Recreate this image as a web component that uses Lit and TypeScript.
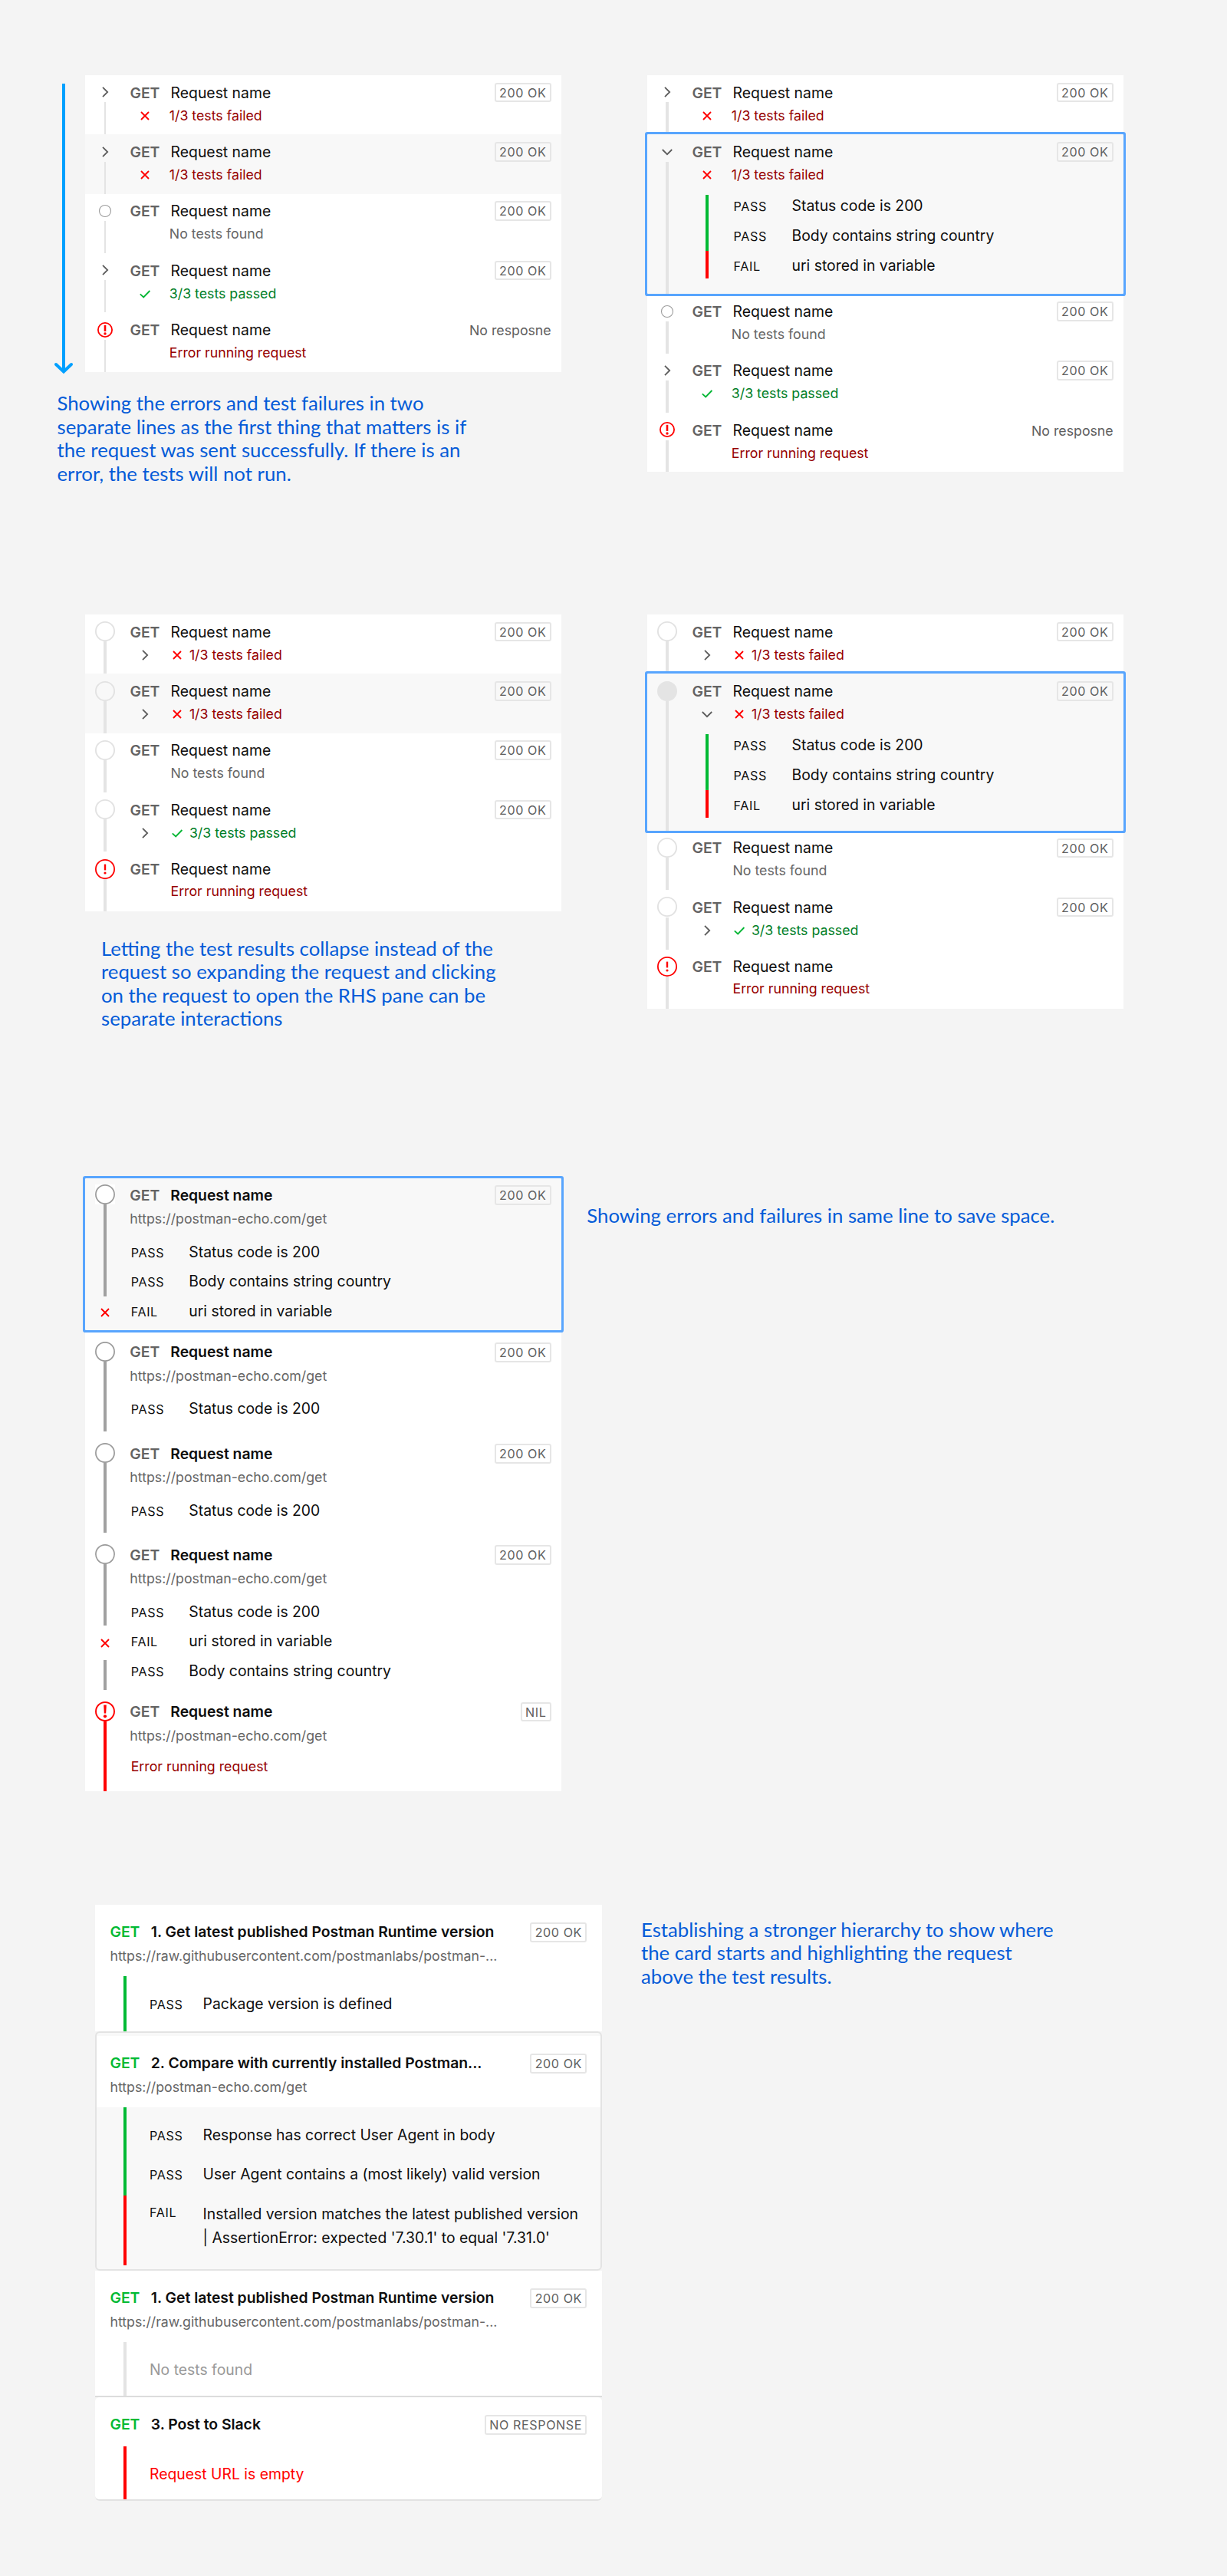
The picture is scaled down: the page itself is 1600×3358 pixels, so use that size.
import { LitElement, html, svg, css, nothing, TemplateResult } from "lit";
import { customElement, property } from "lit/decorators.js";
import { classMap } from "lit/directives/class-map.js";
import { styleMap } from "lit/directives/style-map.js";

type IconName = "right" | "down" | "cross" | "tick" | "dot" | "ring" | "disc" | "ring-dark" | "alert" | "alert-small" | "alert-bold";

interface Test {
  state: "PASS" | "FAIL";
  text: string;
  detail?: string;
}

interface Row {
  rail: IconName;
  height?: number;
  hover?: boolean;
  selected?: boolean;
  toggle?: IconName;
  icon?: IconName;
  tone: "bad" | "good" | "muted";
  summary: string;
  status?: string;
  plainStatus?: boolean;
  tests?: Test[];
}

const ring = (r: number, color: string, width: number, fill = "none") =>
  svg`<circle cx="13" cy="13" r=${r} fill=${fill} stroke=${color} stroke-width=${width}></circle>`;

const shapes: Record<IconName, TemplateResult<2>> = {
  right: svg`<path d="M10 6.8 L16.2 13 L10 19.2" fill="none" stroke="#5c5c5c" stroke-width="1.8"></path>`,
  down: svg`<path d="M6.8 10 L13 16.2 L19.2 10" fill="none" stroke="#5c5c5c" stroke-width="1.8"></path>`,
  cross: svg`<path d="M8 8 L18 18 M18 8 L8 18" fill="none" stroke="#ff0000" stroke-width="1.9"></path>`,
  tick: svg`<path d="M6.8 13.4 L11.2 17.4 L19.4 9" fill="none" stroke="#00b634" stroke-width="1.9"></path>`,
  dot: ring(7.5, "#9c9c9c", 1.1),
  ring: ring(12.1, "#e2e2e2", 1.9),
  disc: ring(12.1, "#e4e4e4", 1.8, "#e4e4e4"),
  "ring-dark": ring(12.1, "#9a9a9a", 1.7),
  alert: svg`${ring(12.1, "#ff0000", 1.8)}<path d="M13 6.6 V14.4" stroke="#ff0000" stroke-width="2.4"></path><circle cx="13" cy="18" r="1.6" fill="#ff0000"></circle>`,
  "alert-small": svg`${ring(9.1, "#ff0000", 1.8)}<path d="M13 6.8 V15" stroke="#ff0000" stroke-width="2.6"></path><circle cx="13" cy="18" r="1.7" fill="#ff0000"></circle>`,
  "alert-bold": svg`${ring(12, "#ff0000", 1.9)}<path d="M11.2 4.6 H14.8 L14.2 15.6 H11.8 Z" fill="#ff0000"></path><circle cx="13" cy="19.3" r="2.1" fill="#ff0000"></circle>`,
};

const icon = (name: IconName) =>
  html`<svg class="icon" width="26" height="26" viewBox="0 0 26 26">${shapes[name]}</svg>`;

const shared = css`
  :host {
    display: block;
    font-family: Inter, "Liberation Sans", sans-serif;
    font-size: 19.36px;
    line-height: 24px;
    color: #0e0e0e;
    box-sizing: border-box;
  }
  .icon {
    display: block;
    flex: none;
    overflow: visible;
  }
  .badge {
    box-sizing: border-box;
    height: 25.6px;
    padding: 1px 4.25px 0;
    border: 2px solid #e6e6e6;
    border-radius: 3px;
    font-size: 16.13px;
    line-height: 21.6px;
    letter-spacing: 0.6px;
    font-weight: 400;
    color: #606060;
    white-space: nowrap;
  }
  .method {
    font-weight: 600;
    color: #636363;
  }
  .state {
    font-size: 16.13px;
    letter-spacing: 0.65px;
    flex: none;
  }
  .bad { color: #960000; }
  .good { color: #007e27; }
  .muted { color: #666666; }
`;

const pass = (text: string): Test => ({ state: "PASS", text });
const fail = (text: string, detail?: string): Test => ({ state: "FAIL", text, detail });

const threeTests = [pass("Status code is 200"), pass("Body contains string country"), fail("uri stored in variable")];

@customElement("request-list")
class RequestList extends LitElement {
  @property({ attribute: false }) rows: Row[] = [];
  @property({ type: Boolean, reflect: true }) thin = false;
  @property({ type: Boolean, reflect: true }) nested = false;

  static styles = [
    shared,
    css`
      :host { width: 621px; }
      .row {
        display: flex;
        box-sizing: border-box;
        height: 77.35px;
        background: #ffffff;
      }
      .hover { background: #f8f8f8; }
      .selected {
        position: relative;
        background: #f8f8f8;
        border-radius: 1px;
        box-shadow: 0 0 0 3px #58a5fe;
      }
      .rail {
        flex: none;
        width: 52px;
        display: flex;
        flex-direction: column;
        align-items: center;
      }
      .head {
        height: 26.2px;
        padding-top: 9.2px;
      }
      .line {
        flex: 1;
        width: 4px;
        background: #e4e4e4;
      }
      :host([thin]) .line { width: 2px; }
      .body {
        flex: 1;
        padding: 10.5px 13.3px 0 6.4px;
      }
      .title, .summary { display: flex; }
      .title .method { width: 53.2px; }
      .name { flex: 1; }
      .badge { margin-top: -0.9px; }
      .plain {
        font-size: 17.74px;
        color: #606060;
        line-height: 25px;
      }
      .summary {
        height: 22px;
        margin-top: 6.3px;
        font-size: 17.74px;
        line-height: 22px;
        align-items: center;
      }
      .lead {
        width: 38.8px;
        margin-right: 12.6px;
        display: flex;
        justify-content: center;
      }
      :host([nested]) .lead { margin-right: 14.3px; }
      .mark {
        width: 16.4px;
        margin-right: 8px;
        display: flex;
        justify-content: center;
      }
      .tests {
        display: flex;
        margin: 14.8px 0 0 17.6px;
      }
      .bar {
        width: 4px;
        height: 109.6px;
        display: flex;
        flex-direction: column;
      }
      .bar-good { flex: 2; background: #00ba34; }
      .bar-bad { flex: 1; background: #ff0000; }
      .cases { margin: -4.2px 0 0 32.6px; }
      .case {
        display: flex;
        align-items: baseline;
        height: 38.67px;
        line-height: 38.67px;
      }
      .state { width: 76px; }
    `,
  ];

  private row(r: Row) {
    const state = classMap({ row: true, hover: !!r.hover, selected: !!r.selected });
    return html`<div class=${state} style=${r.height ? styleMap({ height: `${r.height}px` }) : nothing}>
      <div class="rail">
        <div class="head">${icon(r.rail)}</div>
        <div class="line"></div>
      </div>
      <div class="body">
        <div class="title">
          <span class="method">GET</span>
          <span class="name">Request name</span>
          ${r.status ? html`<span class=${r.plainStatus ? "plain" : "badge"}>${r.status}</span>` : nothing}
        </div>
        <div class="summary ${r.tone}">
          <span class="lead">${this.nested ? (r.toggle ? icon(r.toggle) : nothing) : r.icon ? icon(r.icon) : nothing}</span>
          ${this.nested && r.icon ? html`<span class="mark">${icon(r.icon)}</span>` : nothing}
          <span>${r.summary}</span>
        </div>
        ${r.tests
          ? html`<div class="tests">
              <div class="bar"><div class="bar-good"></div><div class="bar-bad"></div></div>
              <div class="cases">
                ${r.tests.map((t) => html`<div class="case"><span class="state">${t.state}</span><span>${t.text}</span></div>`)}
              </div>
            </div>`
          : nothing}
      </div>
    </div>`;
  }

  render() {
    return this.rows.map((r) => this.row(r));
  }
}

interface Segment {
  kind: "line" | "cross";
  size: number;
}

interface TimelineRow {
  height: number;
  gap: number;
  status: string;
  segments: Segment[];
  tests: Test[];
  error?: string;
  selected?: boolean;
}

@customElement("request-timeline")
class RequestTimeline extends LitElement {
  @property({ attribute: false }) rows: TimelineRow[] = [];

  static styles = [
    shared,
    css`
      :host {
        width: 621px;
        background: #ffffff;
      }
      .row { display: flex; }
      .selected {
        position: relative;
        background: #f8f8f8;
        border-radius: 1px;
        box-shadow: 0 0 0 3px #58a5fe;
      }
      .rail {
        flex: none;
        width: 52px;
        padding-top: 8.8px;
        display: flex;
        flex-direction: column;
        align-items: center;
      }
      .head { background: #ffffff; }
      .line {
        width: 4px;
        background: #a0a0a0;
      }
      .failed .line { background: #ff0000; }
      .cross {
        display: flex;
        align-items: center;
      }
      .body {
        flex: 1;
        padding: 10.3px 13.3px 0 6.3px;
      }
      .title { display: flex; }
      .title .method {
        width: 53px;
      }
      .name {
        flex: 1;
        font-weight: 600;
        letter-spacing: -0.03px;
      }
      .badge { margin-top: -0.5px; }
      .url {
        margin-top: 7.2px;
        font-size: 17.74px;
        line-height: 22px;
        color: #666666;
      }
      .cases { margin: 12.7px 0 0 1.4px; }
      .case {
        display: flex;
        align-items: baseline;
        height: 38.67px;
        line-height: 38.67px;
      }
      .state { width: 75.6px; }
      .error {
        margin: 10.5px 0 0 1.4px;
        font-size: 17.74px;
        line-height: 38.67px;
      }
    `,
  ];

  render() {
    return this.rows.map(
      (r) => html`<div
        class=${classMap({ row: true, selected: !!r.selected, failed: !!r.error })}
        style=${styleMap({ height: `${r.height}px`, marginBottom: `${r.gap}px` })}
      >
        <div class="rail">
          <div class="head">${icon(r.error ? "alert-bold" : "ring-dark")}</div>
          ${r.segments.map(
            (s) => html`<div class=${s.kind} style=${styleMap({ height: `${s.size}px` })}>${s.kind === "cross" ? icon("cross") : nothing}</div>`
          )}
        </div>
        <div class="body">
          <div class="title">
            <span class="method">GET</span>
            <span class="name">Request name</span>
            <span class="badge">${r.status}</span>
          </div>
          <div class="url">https://postman-echo.com/get</div>
          ${r.error
            ? html`<div class="error bad">${r.error}</div>`
            : html`<div class="cases">
                ${r.tests.map((t) => html`<div class="case"><span class="state">${t.state}</span><span>${t.text}</span></div>`)}
              </div>`}
        </div>
      </div>`
    );
  }
}

interface Card {
  kind: "first" | "active" | "middle" | "last";
  name: string;
  url?: string;
  status: string;
  bars: { tone: string; size: number }[];
  tests?: Test[];
  message?: string;
}

@customElement("request-cards")
class RequestCards extends LitElement {
  @property({ attribute: false }) cards: Card[] = [];

  static styles = [
    shared,
    css`
      :host { width: 661px; }
      .card {
        box-sizing: border-box;
        background: #ffffff;
      }
      .first { height: 164.6px; }
      .active {
        height: 312.4px;
        background: #f8f8f8;
        border: 2px solid #e3e3e3;
        border-radius: 6px;
        padding-top: 4.4px;
      }
      .middle { height: 163px; }
      .last {
        height: 135px;
        border-radius: 6px;
        border-bottom: 2px solid #e2e2e2;
      }
      .divider {
        height: 2px;
        background: #dcdcdc;
      }
      .header {
        box-sizing: border-box;
        height: 93.2px;
        padding: 22.7px 19.7px 0 19.4px;
        background: #ffffff;
      }
      .active .header { padding: 22.7px 17.7px 0 17.4px; }
      .last .header {
        height: 64.3px;
        border-radius: 6px;
      }
      .title { display: flex; }
      .title .method {
        width: 53.4px;
        color: #00ba34;
      }
      .name {
        flex: 1;
        font-weight: 600;
        white-space: nowrap;
        letter-spacing: -0.02px;
      }
      .badge { margin-top: 0.3px; }
      .url {
        margin-top: 7.5px;
        font-size: 17.74px;
        line-height: 22px;
        color: #666666;
      }
      .results {
        display: flex;
        padding-left: 37px;
      }
      .active .results { padding-left: 35px; }
      .bar { width: 4px; }
      .green { background: #00ba34; }
      .red { background: #ff0000; }
      .grey { background: #e3e3e3; }
      .cases {
        padding: 10.4px 0 0 30px;
        line-height: 31.6px;
      }
      .case {
        display: flex;
        padding: 10px 0;
      }
      .state {
        width: 69.6px;
        height: 31.4px;
        line-height: 33px;
      }
      .state.FAIL { line-height: 26px; }
      .detail { display: block; }
      .note { padding: 10px 0; color: #999999; }
      .last .note { color: #ff0000; }
    `,
  ];

  render() {
    return this.cards.map(
      (c) => html`<div class="card ${c.kind}">
          <div class="header">
            <div class="title">
              <span class="method">GET</span>
              <span class="name">${c.name}</span>
              <span class="badge">${c.status}</span>
            </div>
            ${c.url ? html`<div class="url">${c.url}</div>` : nothing}
          </div>
          <div class="results">
            <div>${c.bars.map((b) => html`<div class="bar ${b.tone}" style=${styleMap({ height: `${b.size}px` })}></div>`)}</div>
            <div class="cases">
              ${c.message ? html`<div class="note">${c.message}</div>` : nothing}
              ${c.tests?.map(
                (t) => html`<div class="case">
                  <span class="state ${t.state}">${t.state}</span>
                  <span>${t.text}${t.detail ? html`<span class="detail">${t.detail}</span>` : nothing}</span>
                </div>`
              )}
            </div>
          </div>
        </div>
        ${c.kind === "middle" ? html`<div class="divider"></div>` : nothing}`
    );
  }
}

const failed = { tone: "bad", summary: "1/3 tests failed", icon: "cross", status: "200 OK" } as const;
const passed = { tone: "good", summary: "3/3 tests passed", icon: "tick", status: "200 OK" } as const;
const none = { tone: "muted", summary: "No tests found", status: "200 OK" } as const;
const errored = { tone: "bad", summary: "Error running request" } as const;

const listA: Row[] = [
  { ...failed, rail: "right" },
  { ...failed, rail: "right", hover: true },
  { ...none, rail: "dot" },
  { ...passed, rail: "right" },
  { ...errored, rail: "alert-small", status: "No resposne", plainStatus: true },
];
const listB: Row[] = [
  { ...failed, rail: "right" },
  { ...failed, rail: "down", selected: true, height: 208.1, tests: threeTests },
  ...listA.slice(2),
];
const listC: Row[] = [
  { ...failed, rail: "ring", toggle: "right" },
  { ...failed, rail: "ring", toggle: "right", hover: true },
  { ...none, rail: "ring" },
  { ...passed, rail: "ring", toggle: "right" },
  { ...errored, rail: "alert" },
];
const listD: Row[] = [
  listC[0],
  { ...failed, rail: "disc", toggle: "down", selected: true, height: 204.6, tests: threeTests },
  ...listC.slice(2),
];

const line = (size: number): Segment => ({ kind: "line", size });
const cross = (size: number): Segment => ({ kind: "cross", size });

const timeline: TimelineRow[] = [
  { height: 198.7, gap: 6, status: "200 OK", selected: true, segments: [line(119.8), cross(42)], tests: threeTests },
  { height: 126.1, gap: 6, status: "200 OK", segments: [line(91.3)], tests: [pass("Status code is 200")] },
  { height: 126.1, gap: 6, status: "200 OK", segments: [line(91.3)], tests: [pass("Status code is 200")] },
  {
    height: 198.7, gap: 6, status: "200 OK",
    segments: [line(80), cross(45), line(39)],
    tests: [pass("Status code is 200"), fail("uri stored in variable"), pass("Body contains string country")],
  },
  { height: 126.1, gap: 0, status: "NIL", segments: [line(91.3)], tests: [], error: "Error running request" },
];

const runtimeUrl = "https://raw.githubusercontent.com/postmanlabs/postman-...";
const cards: Card[] = [
  {
    kind: "first", name: "1. Get latest published Postman Runtime version", url: runtimeUrl, status: "200 OK",
    bars: [{ tone: "green", size: 71.4 }], tests: [pass("Package version is defined")],
  },
  {
    kind: "active", name: "2. Compare with currently installed Postman...", url: "https://postman-echo.com/get", status: "200 OK",
    bars: [{ tone: "green", size: 114.7 }, { tone: "red", size: 91.6 }],
    tests: [
      pass("Response has correct User Agent in body"),
      pass("User Agent contains a (most likely) valid version"),
      fail("Installed version matches the latest published version", "| AssertionError: expected '7.30.1' to equal '7.31.0'"),
    ],
  },
  {
    kind: "middle", name: "1. Get latest published Postman Runtime version", url: runtimeUrl, status: "200 OK",
    bars: [{ tone: "grey", size: 69.8 }], message: "No tests found",
  },
  {
    kind: "last", name: "3. Post to Slack", status: "NO RESPONSE",
    bars: [{ tone: "red", size: 68.7 }], message: "Request URL is empty",
  },
];

@customElement("app-root")
class AppRoot extends LitElement {
  static styles = css`
    :host {
      display: block;
      box-sizing: border-box;
      width: 1600px;
      height: 3358px;
      padding-top: 98px;
      background: #f4f4f4;
      overflow: hidden;
    }
    .section {
      display: flex;
      align-items: flex-start;
    }
    .one { height: 703px; padding-left: 71px; }
    .two { height: 734.5px; padding-left: 111px; }
    .three { height: 947.5px; padding-left: 111px; }
    .four { padding-left: 124px; }
    .left-one { width: 773px; }
    .left-two { width: 733px; }
    .with-arrow {
      display: flex;
      gap: 16px;
    }
    .arrow {
      flex: none;
      margin-top: 10px;
      height: 380px;
      overflow: visible;
    }
    .note {
      margin: 0;
      font-family: Lato, Carlito, sans-serif;
      font-size: 25.75px;
      line-height: 30.55px;
      color: #045bd8;
      white-space: pre;
    }
    .note-one { padding: 22.4px 0 0 3.5px; }
    .note-two { padding: 33px 0 0 21px; }
    .note-three { padding: 33.4px 0 0 33.3px; }
    .note-four { padding: 16.7px 0 0 51px; }
  `;

  render() {
    return html`
      <section class="section one">
        <div class="left-one">
          <div class="with-arrow">
            <svg class="arrow" width="24" height="380" viewBox="0 0 24 380" fill="none" stroke="#00a0ff" stroke-width="4">
              <path d="M12 1 V376"></path>
              <path d="M2 367 L12 376.5 L22 367" stroke-linecap="round"></path>
            </svg>
            <request-list thin .rows=${listA}></request-list>
          </div>
          <p class="note note-one">${"Showing the errors and test failures in two\nseparate lines as the first thing that matters is if\nthe request was sent successfully. If there is an\nerror, the tests will not run."}</p>
        </div>
        <request-list .rows=${listB}></request-list>
      </section>
      <section class="section two">
        <div class="left-two">
          <request-list nested .rows=${listC}></request-list>
          <p class="note note-two">${"Letting the test results collapse instead of the\nrequest so expanding the request and clicking\non the request to open the RHS pane can be\nseparate interactions"}</p>
        </div>
        <request-list nested .rows=${listD}></request-list>
      </section>
      <section class="section three">
        <request-timeline .rows=${timeline}></request-timeline>
        <p class="note note-three">Showing errors and failures in same line to save space.</p>
      </section>
      <section class="section four">
        <request-cards .cards=${cards}></request-cards>
        <p class="note note-four">${"Establishing a stronger hierarchy to show where\nthe card starts and highlighting the request\nabove the test results."}</p>
      </section>
    `;
  }
}
